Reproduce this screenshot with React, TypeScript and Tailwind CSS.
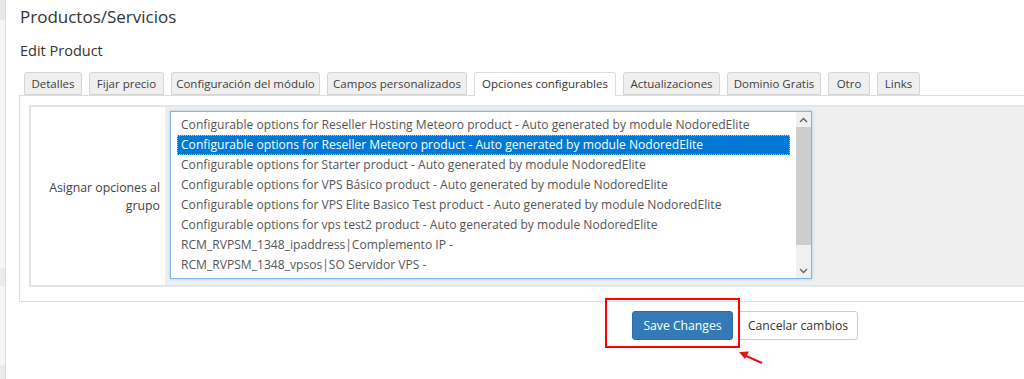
import React from "react";

const tabs: [string, string][] = [
  ["Detalles", "w-[58px]"],
  ["Fijar precio", "w-[75px]"],
  ["Configuración del módulo", "w-[149px]"],
  ["Campos personalizados", "w-[140px]"],
  ["Opciones configurables", "w-[142px]"],
  ["Actualizaciones", "w-[97px]"],
  ["Dominio Gratis", "w-[94px]"],
  ["Otro", "w-[42px]"],
  ["Links", "w-[43px]"],
];

const options = [
  "Configurable options for Reseller Hosting Meteoro product - Auto generated by module NodoredElite",
  "Configurable options for Reseller Meteoro product - Auto generated by module NodoredElite",
  "Configurable options for Starter product - Auto generated by module NodoredElite",
  "Configurable options for VPS Básico product - Auto generated by module NodoredElite",
  "Configurable options for VPS Elite Basico Test product - Auto generated by module NodoredElite",
  "Configurable options for vps test2 product - Auto generated by module NodoredElite",
  "RCM_RVPSM_1348_ipaddress|Complemento IP -",
  "RCM_RVPSM_1348_vpsos|SO Servidor VPS -",
];

export default function App() {
  return (
    <div className="relative flex w-[1024px] h-[379px] overflow-hidden bg-white font-['Open_Sans',sans-serif] text-[#333]">
      {/* left sidebar strip */}
      <div className="flex w-[6px] shrink-0 flex-col border-r border-[#dcdcdc] bg-[#f6f6f6]">
        <div className="h-[20px] bg-[#e8e8e8]" />
        <div className="h-[248px]" />
        <div className="h-[18px] bg-[#ebebeb]" />
        <div className="h-[79px]" />
        <div className="flex-1 bg-[#ebebeb]" />
      </div>

      <div className="w-[1200px] shrink-0 pl-[13px]">
        <h1 className="mt-[4px] pl-[1px] text-[17px] leading-[26px] text-[#333]">Productos/Servicios</h1>
        <h2 className="mt-[11px] pl-[1px] text-[14.5px] leading-[20px] text-[#333]">Edit Product</h2>

        {/* tabs */}
        <div className="mt-[11px] flex gap-[7px] pl-[5px]">
          {tabs.map(([t, w], i) => (
            <div
              key={t}
              className={
                i === 4
                  ? `relative z-10 h-[24px] ${w} rounded-t-[3px] border border-b-0 border-[#dcdcdc] bg-white pt-[3px] text-center text-[11.5px] leading-[16px] text-[#333]`
                  : `h-[23px] ${w} rounded-t-[3px] border border-[#d4d4d4] bg-[#efefef] pt-[3px] text-center text-[11.5px] leading-[16px] text-[#3d3d3d]`
              }
            >
              {t}
            </div>
          ))}
        </div>

        {/* tab content */}
        <div className="-mt-px border border-[#dcdcdc] px-[9px] pb-[14px] pt-[9px]">
          <div className="flex h-[182px] border-2 border-[#e1e6ea]">
            <div className="flex w-[134px] shrink-0 items-center justify-end bg-white pr-[5px] text-right text-[12.3px] leading-[18px] text-[#444]">
              <span className="mt-[2px]">
                Asignar opciones al
                <br />
                grupo
              </span>
            </div>
            <div className="flex-1 bg-[#efefef] pl-[5px] pt-[4px]">
              <div className="flex h-[168px] w-[642px] border border-[#7fb4e6] bg-white shadow-[0_0_3px_rgba(102,175,233,0.5)]">
                <div className="flex-1 pl-[6px] pr-[6px] pt-[3px]">
                  {options.map((o, i) => (
                    <div
                      key={o}
                      className={
                        i === 1
                          ? "h-[20px] whitespace-nowrap border border-dotted border-[#9cc7f0] bg-[#0078d7] pl-[3px] text-[12.1px] leading-[18px] text-white"
                          : "h-[20px] whitespace-nowrap pl-[4px] text-[12.1px] leading-[20px] text-[#555]"
                      }
                    >
                      {o}
                    </div>
                  ))}
                </div>
                <div className="flex w-[15px] shrink-0 flex-col bg-[#f0f0f0]">
                  <div className="flex h-[15px] items-center justify-center">
                    <svg width="9" height="6" viewBox="0 0 9 6">
                      <path d="M1 5 L4.5 1.5 L8 5" fill="none" stroke="#606060" strokeWidth="1.3" />
                    </svg>
                  </div>
                  <div className="h-[118px] bg-[#cdcdcd]" />
                  <div className="flex-1" />
                  <div className="flex h-[15px] items-center justify-center">
                    <svg width="9" height="6" viewBox="0 0 9 6">
                      <path d="M1 1 L4.5 4.5 L8 1" fill="none" stroke="#606060" strokeWidth="1.3" />
                    </svg>
                  </div>
                </div>
              </div>
            </div>
          </div>
        </div>

        {/* buttons */}
        <div className="mt-[9px] flex gap-[5px] pl-[613px]">
          <button className="h-[29px] w-[101px] rounded-[3px] border border-[#2e6da4] bg-[#337ab7] text-[12.2px] leading-[18px] text-white">
            Save Changes
          </button>
          <button className="h-[29px] w-[120px] rounded-[3px] border border-[#ccc] bg-white text-[12.2px] leading-[18px] text-[#333]">
            Cancelar cambios
          </button>
        </div>
      </div>

      {/* annotation overlay */}
      <div className="absolute left-[605px] top-[298px] h-[50px] w-[135px] border-2 border-[#ff0000]" />
      <svg className="absolute left-[736px] top-[348px]" width="30" height="18" viewBox="0 0 30 18">
        <line x1="26" y1="15" x2="8" y2="7" stroke="#e8101a" strokeWidth="2.2" />
        <polygon points="3,4 13,3.5 9,11" fill="#e8101a" />
      </svg>
    </div>
  );
}
